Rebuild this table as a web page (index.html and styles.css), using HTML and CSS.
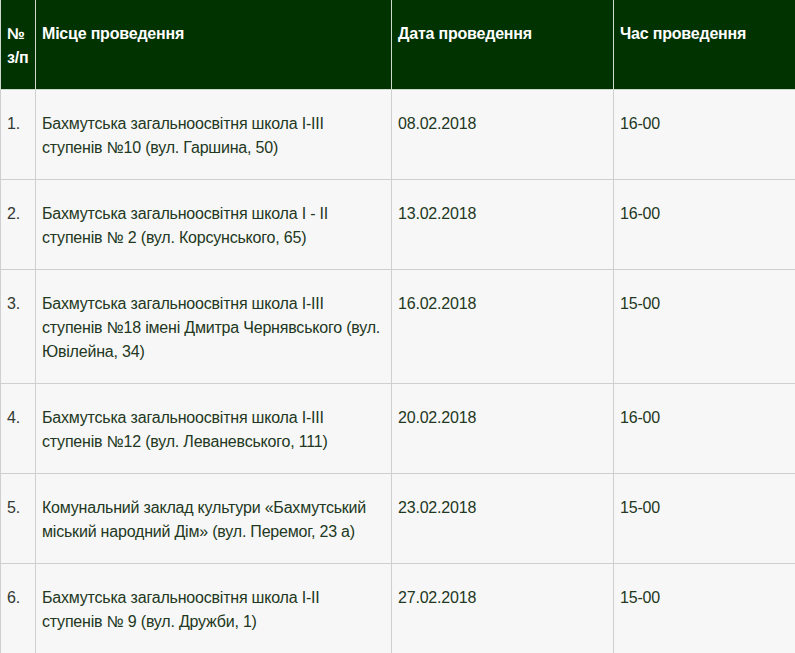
FILE: index.html
```html
<!DOCTYPE html>
<html lang="uk">
<head>
<meta charset="utf-8">
<title>Графік</title>
<link rel="stylesheet" href="styles.css">
</head>
<body>
<div class="wrap">
<table class="sched">
  <colgroup>
    <col class="c-num">
    <col class="c-place">
    <col class="c-date">
    <col class="c-time">
  </colgroup>
  <thead>
    <tr>
      <th>№ <span class="nw">з/п</span></th>
      <th>Місце проведення</th>
      <th>Дата проведення</th>
      <th>Час проведення</th>
    </tr>
  </thead>
  <tbody>
    <tr><td>1.</td><td>Бахмутська загальноосвітня школа I-III ступенів №10 (вул. Гаршина, 50)</td><td>08.02.2018</td><td>16-00</td></tr>
    <tr><td>2.</td><td>Бахмутська загальноосвітня школа I - II ступенів № 2 (вул. Корсунського, 65)</td><td>13.02.2018</td><td>16-00</td></tr>
    <tr><td>3.</td><td>Бахмутська загальноосвітня школа I-III ступенів №18 імені Дмитра Чернявського (вул. Ювілейна, 34)</td><td>16.02.2018</td><td>15-00</td></tr>
    <tr><td>4.</td><td>Бахмутська загальноосвітня школа I-III ступенів №12 (вул. Леваневського, 111)</td><td>20.02.2018</td><td>16-00</td></tr>
    <tr><td>5.</td><td>Комунальний заклад культури «Бахмутський міський народний Дім» (вул. Перемог, 23 а)</td><td>23.02.2018</td><td>15-00</td></tr>
    <tr><td>6.</td><td>Бахмутська загальноосвітня школа I-II ступенів № 9 (вул. Дружби, 1)</td><td>27.02.2018</td><td>15-00</td></tr>
  </tbody>
</table>
</div>
</body>
</html>
```

FILE: styles.css
```css
html, body {
  margin: 0;
  padding: 0;
  background: #ffffff;
}
.wrap {
  width: 795px;
  overflow: hidden;
}
.sched {
  width: 800px;
  table-layout: fixed;
  border-collapse: collapse;
  font-family: "Liberation Sans", Arial, sans-serif;
  font-size: 16px;
  line-height: 24px;
  letter-spacing: -0.2px;
}
.c-num { width: 35px; }
.c-place { width: 356px; }
.c-date { width: 222px; }
.c-time { width: 187px; }
.sched th,
.sched td {
  border: 1px solid #cfcfcf;
  padding: 22px 7px 19px 6px;
  text-align: left;
  vertical-align: top;
}
.sched th:first-child,
.sched td:first-child {
  padding-left: 6px;
  padding-right: 2px;
}
.nw {
  white-space: nowrap;
}
.sched th {
  background: #003300;
  color: #ffffff;
  font-weight: bold;
  border-top: none;
  border-color: #cfd8cf;
}
.sched td {
  background: #f7f7f7;
  color: #223822;
}
.sched td:first-child {
  color: #333a33;
}
```
